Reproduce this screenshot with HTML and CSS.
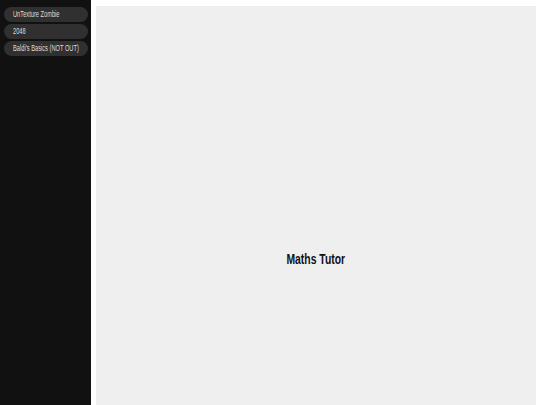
FILE: index.html
```html
<!DOCTYPE html>
<html>
<head>
<meta charset="utf-8">
<link rel="stylesheet" href="styles.css">
</head>
<body>
<div class="page">
  <nav class="sidebar">
    <button class="game"><span class="squash">UnTexture Zombie</span></button>
    <button class="game"><span class="squash">2048</span></button>
    <button class="game"><span class="squash">Baldi's Basics (NOT OUT)</span></button>
  </nav>
  <main class="content">
    <h1 class="title"><span class="squash">Maths Tutor</span></h1>
  </main>
</div>
</body>
</html>
```
FILE: styles.css
```css
html, body {
  margin: 0;
  padding: 0;
  background: #ffffff;
  font-family: "Liberation Sans", Arial, sans-serif;
}
.page {
  display: flex;
  height: 405px;
  overflow: hidden;
}
.sidebar {
  width: 91px;
  flex: none;
  background: #111111;
  display: flex;
  flex-direction: column;
  gap: 2px;
  padding: 7px 3px 0 4px;
  box-sizing: border-box;
}
.game {
  height: 15px;
  width: 84px;
  border: none;
  border-radius: 8px;
  background: #303030;
  color: #dedede;
  font-family: "Liberation Sans", Arial, sans-serif;
  font-size: 8.5px;
  text-align: left;
  padding: 0 0 0 9px;
  margin: 0;
  line-height: 15px;
  white-space: nowrap;
  overflow: visible;
}
.squash {
  display: inline-block;
  transform: scaleX(0.67);
  transform-origin: left center;
}
.content {
  flex: 1;
  margin: 6px 4px 0 5px;
  background: #efefef;
  display: flex;
  justify-content: center;
  align-items: flex-start;
}
.title {
  margin: 0;
  padding-top: 244px;
  font-size: 15.5px;
  font-weight: bold;
  color: #111111;
  white-space: nowrap;
}
.title .squash {
  transform-origin: center center;
}
```
